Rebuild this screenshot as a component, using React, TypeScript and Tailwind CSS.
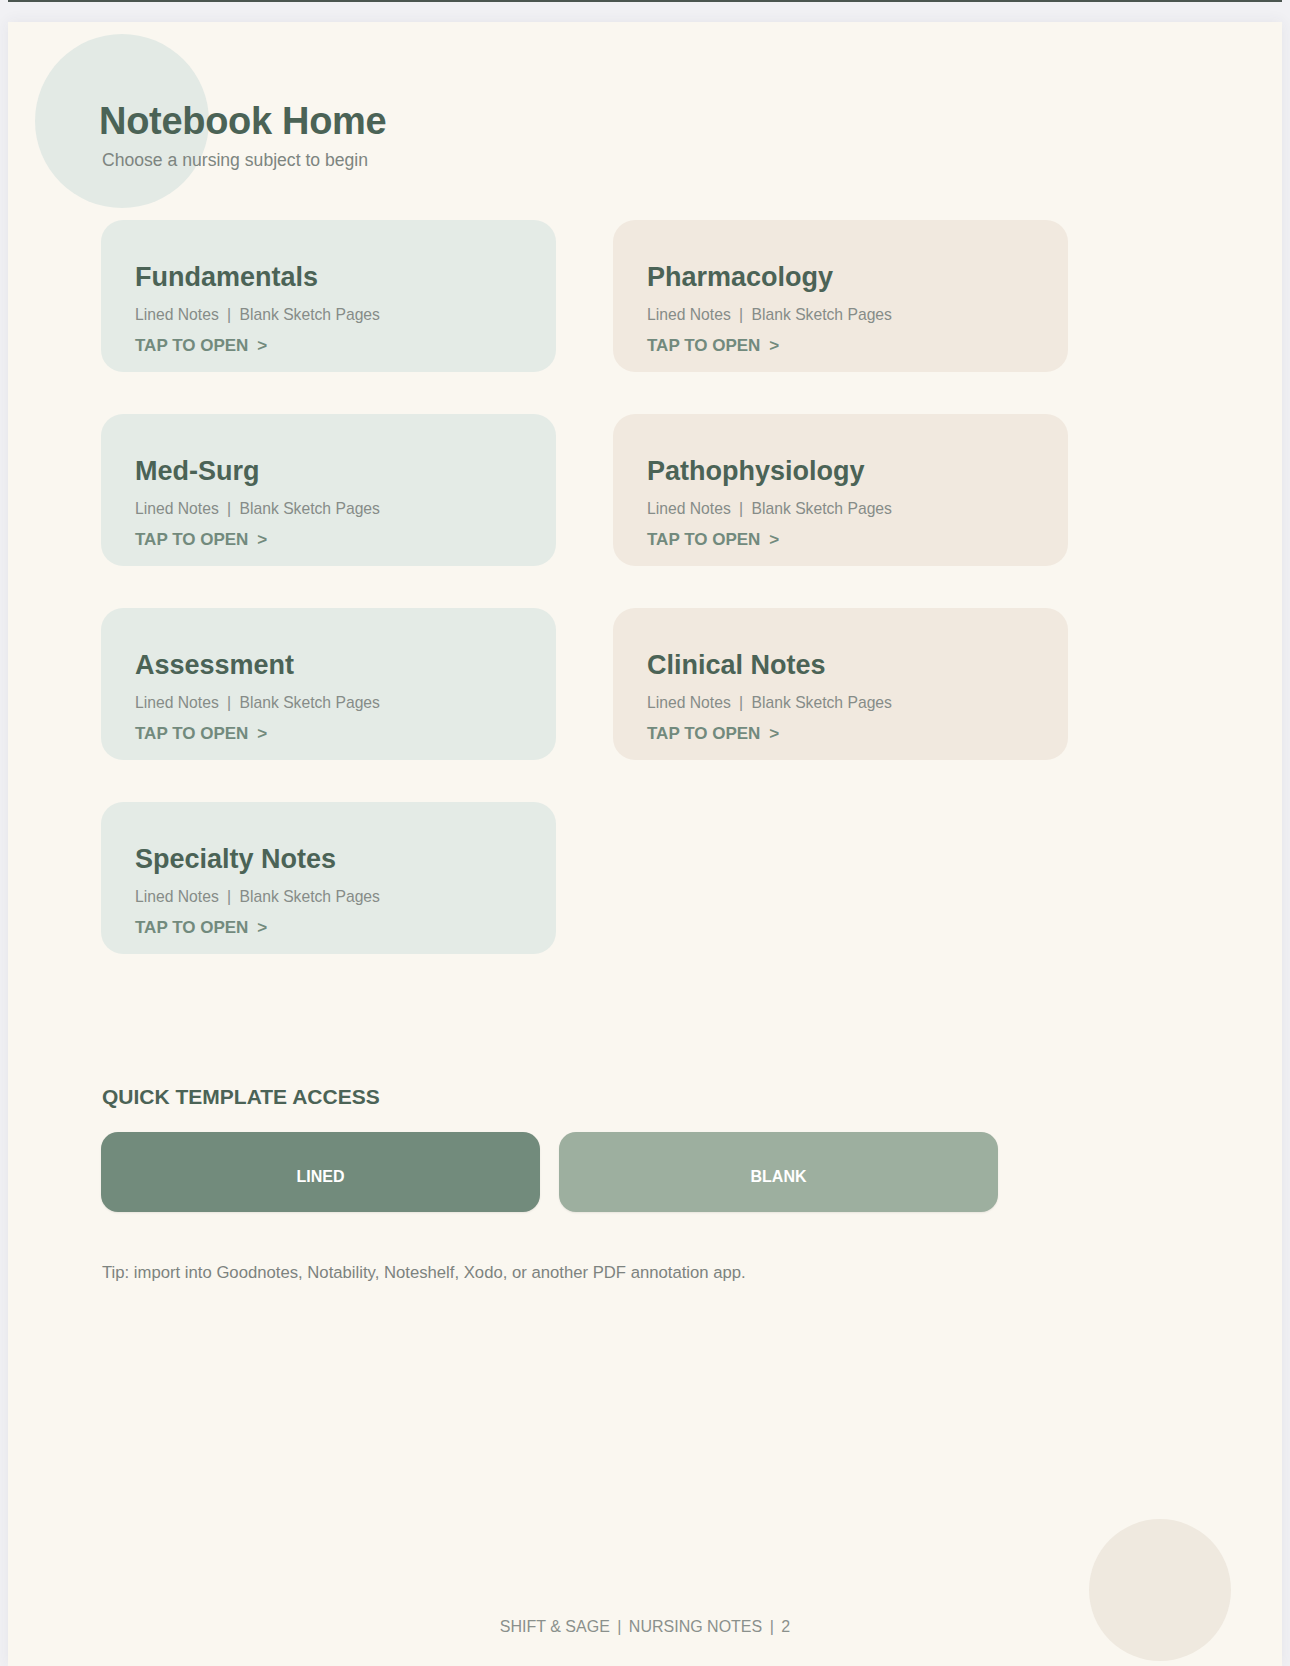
import React from "react";

interface Subject {
  name: string;
  tone: "sage" | "sand";
}

const SUBJECTS: Subject[] = [
  { name: "Fundamentals", tone: "sage" },
  { name: "Pharmacology", tone: "sand" },
  { name: "Med-Surg", tone: "sage" },
  { name: "Pathophysiology", tone: "sand" },
  { name: "Assessment", tone: "sage" },
  { name: "Clinical Notes", tone: "sand" },
  { name: "Specialty Notes", tone: "sage" },
];

function SubjectCard({ subject }: { subject: Subject }) {
  return (
    <div
      className={
        subject.tone === "sage"
          ? "h-[152px] rounded-[22px] bg-[#e4ebe6] px-[34px] pt-[43px]"
          : "h-[152px] rounded-[22px] bg-[#f1e9df] px-[34px] pt-[43px]"
      }
    >
      <h2 className="text-[27px] font-bold leading-[28px] text-[#4b6356]">{subject.name}</h2>
      <p className="mt-[14px] text-[15.7px] leading-[20px] text-[#868c88]">
        Lined Notes<span className="mx-[4px]"> | </span>Blank Sketch Pages
      </p>
      <p className="mt-[11px] text-[17px] font-bold leading-[20px] text-[#728a7d]">
        TAP TO OPEN<span className="ml-[9px]">&gt;</span>
      </p>
    </div>
  );
}

export default function App() {
  return (
    <div className="min-h-[1666px] overflow-hidden bg-[#f1f1f4] font-['Liberation_Sans',Arial,sans-serif]">
      <div className="mx-[8px] h-[2px] bg-[#4b5650]" />
      <div className="relative mx-[8px] mt-[20px] min-h-[1644px] bg-[#faf7f0] shadow-[0_0_14px_rgba(60,60,80,0.07)]">
        {/* decorative circles */}
        <div className="absolute left-[27px] top-[12px] h-[174px] w-[174px] rounded-full bg-[#e3eae5]" />
        <div className="absolute left-[1081px] top-[1497px] h-[142px] w-[142px] rounded-full bg-[#efe9df]" />

        <div className="relative pl-[93px] pt-[80px]">
          <h1 className="-ml-[2px] text-[38px] font-bold leading-[38px] tracking-[-0.3px] text-[#4b6356]">
            Notebook Home
          </h1>
          <p className="mt-[9px] pl-[1px] text-[17.6px] leading-[22px] text-[#7d8580]">
            Choose a nursing subject to begin
          </p>

          <div className="mt-[49px] grid grid-cols-[455px_455px] gap-x-[57px] gap-y-[42px]">
            {SUBJECTS.map((subject) => (
              <SubjectCard key={subject.name} subject={subject} />
            ))}
          </div>

          <h3 className="mt-[131px] pl-[1px] text-[21px] font-bold leading-[24px] text-[#4b6356]">
            QUICK TEMPLATE ACCESS
          </h3>
          <div className="mt-[23px] flex gap-[19px]">
            <button className="flex h-[80px] w-[439px] items-center justify-center rounded-[17px] bg-[#728b7c] pt-[10px] text-[16px] font-bold text-white shadow-[0_1px_2px_rgba(0,0,0,0.08)]">
              LINED
            </button>
            <button className="flex h-[80px] w-[439px] items-center justify-center rounded-[17px] bg-[#9daf9f] pt-[10px] text-[16px] font-bold text-white shadow-[0_1px_2px_rgba(0,0,0,0.08)]">
              BLANK
            </button>
          </div>

          <p className="mt-[51px] pl-[1px] text-[16.7px] leading-[20px] text-[#7d837f]">
            Tip: import into Goodnotes, Notability, Noteshelf, Xodo, or another PDF annotation app.
          </p>
        </div>

        <p className="relative mt-[334px] text-center text-[16px] leading-[20px] text-[#8a908c]">
          SHIFT &amp; SAGE<span className="mx-[3px]"> | </span>NURSING NOTES<span className="mx-[3px]"> | </span>2
        </p>
      </div>
    </div>
  );
}
